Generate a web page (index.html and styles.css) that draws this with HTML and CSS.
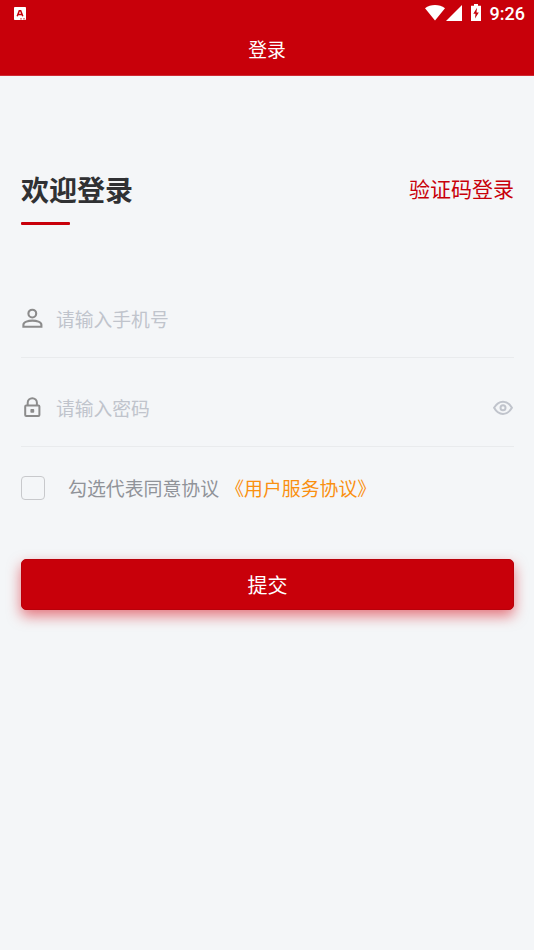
FILE: index.html
```html
<!DOCTYPE html>
<html lang="zh-CN">
<head>
<meta charset="utf-8">
<meta name="viewport" content="width=device-width, initial-scale=1">
<title>登录</title>
<link rel="stylesheet" href="styles.css">
</head>
<body>
<header class="header">
  <div class="status">
    <svg class="status-app" viewBox="0 0 12 13"><rect width="12" height="13" rx="0.8" fill="#fff"/><path d="M3.200 9.300 5.300 3.700h1.400L8.800 9.300M4.300 7.400h3.400" fill="none" stroke="#c8000a" stroke-width="1.500"/><path d="M6 11.900h2M9 11.900h2" stroke="#c8000a" stroke-width="0.700"/></svg>
    <div class="status-right">
      <svg class="wifi" viewBox="0 0 20 16"><path d="M10 15.500 0 3.300Q4.400 0 10 0t10 3.300z" fill="#fff"/></svg>
      <svg class="signal" viewBox="0 0 16 16"><path d="M16 0v16H0z" fill="#fff"/></svg>
      <svg class="battery" viewBox="0 0 10 17"><path d="M3 0h4v1.700h3V17H0V1.700h3z" fill="#fff"/><path d="M6 3.800 2.300 9.700h2.200L4 14.600l3.800-6.200H5.500z" fill="#c8000a"/></svg>
      <span class="clock">9:26</span>
    </div>
  </div>
  <h1 class="nav-title">登录</h1>
</header>
<main class="page">
  <div class="heading">
    <h2 class="welcome">欢迎登录</h2>
    <a class="code-login">验证码登录</a>
  </div>
  <form class="form">
    <label class="field">
      <svg class="field-icon" viewBox="0 0 22 22" fill="none" stroke="#8c8c8c" stroke-width="2.100"><circle cx="11.300" cy="5.600" r="3.900"/><path d="M2.400 18.700v-1.900c0-2.800 4.800-4.200 9-4.200s9 1.400 9 4.200v1.900z"/></svg>
      <input class="input" type="text" placeholder="请输入手机号">
    </label>
    <label class="field">
      <svg class="field-icon" viewBox="0 0 22 22" fill="none" stroke="#8c8c8c" stroke-width="2"><rect x="4.200" y="8.600" width="14.200" height="10.400" rx="1"/><path d="M6.700 8.600V5.800a4.600 4.600 0 0 1 9.200 0v2.800"/><rect x="9.400" y="11.900" width="3.800" height="3.800" rx="0.800" fill="#8c8c8c" stroke="none"/></svg>
      <input class="input" type="password" placeholder="请输入密码">
      <svg class="eye" viewBox="0 0 20 16" fill="none" stroke="#c0c4cc" stroke-width="2"><path d="M1.100 7.800Q4.500 1.700 10 1.700t8.900 6.100Q15.500 13.900 10 13.900T1.100 7.800z"/><circle cx="10" cy="7.800" r="2.500"/></svg>
    </label>
    <div class="agree">
      <span class="checkbox"></span>
      <span class="agree-text">勾选代表同意协议</span>
      <a class="agree-link">《用户服务协议》</a>
    </div>
    <button class="submit" type="button">提交</button>
  </form>
</main>
</body>
</html>
```
FILE: styles.css
```css
* { box-sizing: border-box; }
body {
  margin: 0;
  min-height: 950px;
  background: #f4f6f8;
  font-family: "Noto Sans CJK SC", sans-serif;
}
.header {
  height: 76px;
  background: #c8000a;
  border-bottom: 1px solid #cf2a34;
  color: #fff;
}
.status {
  display: flex;
  justify-content: space-between;
  height: 28px;
  padding: 0 9px 0 14px;
}
.status-app { width: 12px; height: 13px; margin-top: 7px; }
.status-right { display: flex; align-items: flex-start; }
.wifi { width: 20px; height: 16px; margin-top: 5px; }
.signal { width: 16px; height: 16px; margin: 5px 9px 0 1px; }
.battery { width: 10px; height: 17px; margin: 4px 9px 0 0; }
.clock { font: 500 18px/28px Roboto, sans-serif; }
.nav-title {
  margin: 0;
  font-size: 18.8px;
  font-weight: 400;
  line-height: 42px;
  text-align: center;
}
.page { padding: 93px 20px 0 21px; }
.heading { display: flex; justify-content: space-between; }
.welcome {
  margin: 0;
  color: #303133;
  font-size: 28px;
  font-weight: 700;
  line-height: 40px;
}
.welcome::after {
  content: "";
  display: block;
  width: 49px;
  height: 3px;
  margin-top: 13px;
  border-radius: 1px;
  background: #c8000a;
}
.code-login { color: #c8000a; font-size: 21px; line-height: 38px; }
.form { margin-top: 44px; }
.field {
  display: flex;
  align-items: center;
  height: 89px;
  padding-top: 12px;
  border-bottom: 1px solid #e9ebed;
}
.field-icon { width: 22px; height: 22px; margin-right: 13px; }
.input {
  flex: 1;
  min-width: 0;
  height: 30px;
  padding: 0;
  border: 0;
  outline: 0;
  background: transparent;
  font: 400 18.8px/30px "Noto Sans CJK SC", sans-serif;
}
.input::placeholder { color: #c0c4cc; opacity: 1; }
.eye { width: 20px; height: 16px; margin-right: 1px; }
.agree {
  display: flex;
  align-items: center;
  margin-top: 26px;
  font-size: 18.9px;
  line-height: 30px;
}
.checkbox {
  width: 24px;
  height: 24px;
  margin-right: 23px;
  border: 1px solid #c8c9cc;
  border-radius: 4px;
}
.agree-text { color: #909399; }
.agree-link { margin-left: 6px; color: #fa9010; }
.submit {
  display: block;
  width: 100%;
  height: 51px;
  margin-top: 56px;
  padding: 0;
  border: 1px solid #b90009;
  border-radius: 5px;
  background: #c8000a;
  box-shadow: 0 6px 14px rgba(215, 0, 15, 0.52);
  color: #fff;
  font: 400 20px/49px "Noto Sans CJK SC", sans-serif;
}
```
